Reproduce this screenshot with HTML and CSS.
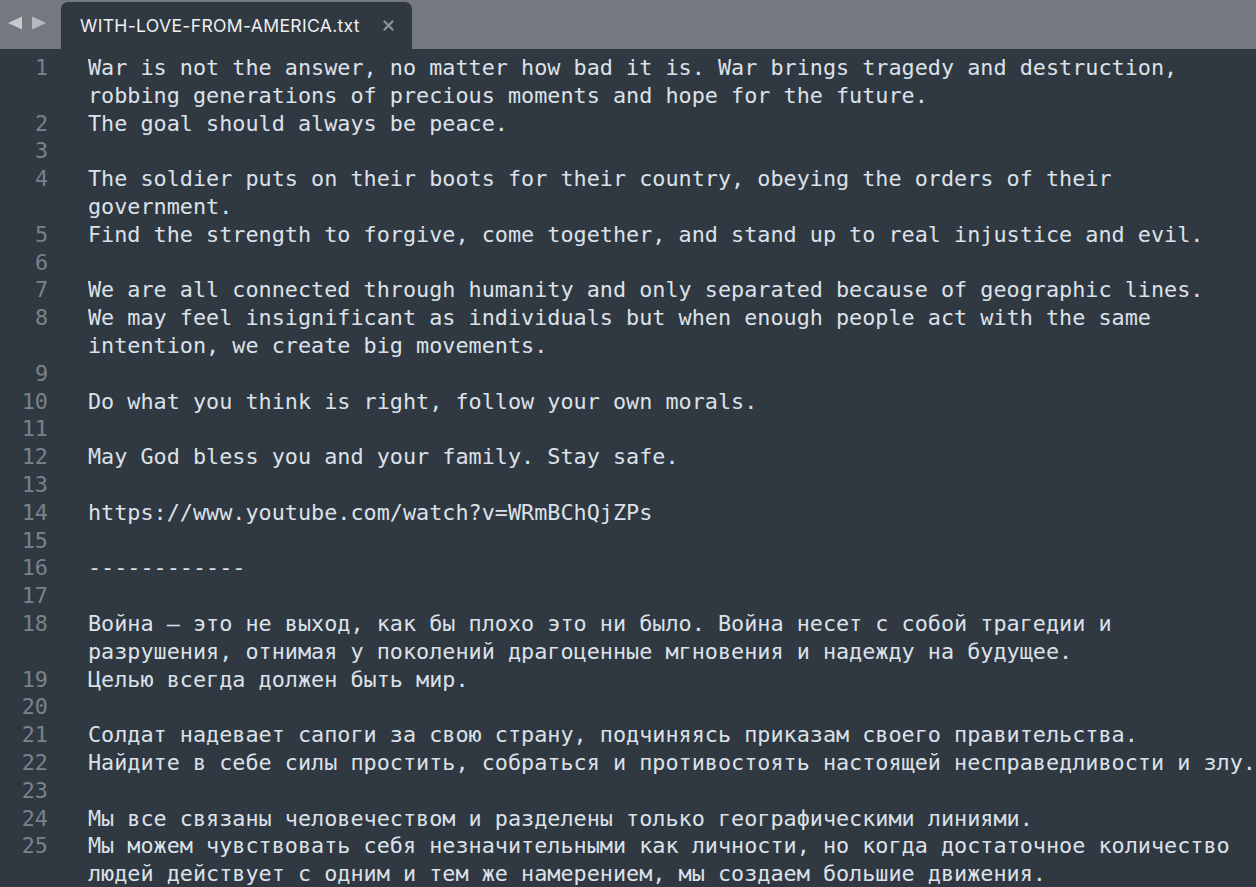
FILE: index.html
```html
<!DOCTYPE html>
<html lang="en">
<head>
<meta charset="utf-8">
<title>WITH-LOVE-FROM-AMERICA.txt</title>
<link rel="stylesheet" href="styles.css">
</head>
<body>
<div class="tabbar">
  <div class="nav">
    <svg width="61" height="49" viewBox="0 0 61 49" aria-hidden="true">
      <polygon points="22,16.5 22,29.5 8,23" fill="#c6c9ce"/>
      <polygon points="32,16.5 32,29.5 46,23" fill="#b6b9bf"/>
    </svg>
  </div>
  <div class="tab">
    <span class="tab-title">WITH-LOVE-FROM-AMERICA.txt</span>
    <svg class="close" width="11" height="11" viewBox="0 0 11 11" aria-hidden="true">
      <path d="M1.5 1.5 L9.5 9.5 M9.5 1.5 L1.5 9.5" stroke="#8c9097" stroke-width="2.3" stroke-linecap="round"/>
    </svg>
  </div>
</div>
<div class="editor">
  <div class="row"><span class="ln">1</span><span class="code">War is not the answer, no matter how bad it is. War brings tragedy and destruction,</span></div>
  <div class="row"><span class="ln"></span><span class="code">robbing generations of precious moments and hope for the future.</span></div>
  <div class="row"><span class="ln">2</span><span class="code">The goal should always be peace.</span></div>
  <div class="row"><span class="ln">3</span><span class="code"></span></div>
  <div class="row"><span class="ln">4</span><span class="code">The soldier puts on their boots for their country, obeying the orders of their</span></div>
  <div class="row"><span class="ln"></span><span class="code">government.</span></div>
  <div class="row"><span class="ln">5</span><span class="code">Find the strength to forgive, come together, and stand up to real injustice and evil.</span></div>
  <div class="row"><span class="ln">6</span><span class="code"></span></div>
  <div class="row"><span class="ln">7</span><span class="code">We are all connected through humanity and only separated because of geographic lines.</span></div>
  <div class="row"><span class="ln">8</span><span class="code">We may feel insignificant as individuals but when enough people act with the same</span></div>
  <div class="row"><span class="ln"></span><span class="code">intention, we create big movements.</span></div>
  <div class="row"><span class="ln">9</span><span class="code"></span></div>
  <div class="row"><span class="ln">10</span><span class="code">Do what you think is right, follow your own morals.</span></div>
  <div class="row"><span class="ln">11</span><span class="code"></span></div>
  <div class="row"><span class="ln">12</span><span class="code">May God bless you and your family. Stay safe.</span></div>
  <div class="row"><span class="ln">13</span><span class="code"></span></div>
  <div class="row"><span class="ln">14</span><span class="code">https://www.youtube.com/watch?v=WRmBChQjZPs</span></div>
  <div class="row"><span class="ln">15</span><span class="code"></span></div>
  <div class="row"><span class="ln">16</span><span class="code">------------</span></div>
  <div class="row"><span class="ln">17</span><span class="code"></span></div>
  <div class="row"><span class="ln">18</span><span class="code">Война — это не выход, как бы плохо это ни было. Война несет с собой трагедии и</span></div>
  <div class="row"><span class="ln"></span><span class="code">разрушения, отнимая у поколений драгоценные мгновения и надежду на будущее.</span></div>
  <div class="row"><span class="ln">19</span><span class="code">Целью всегда должен быть мир.</span></div>
  <div class="row"><span class="ln">20</span><span class="code"></span></div>
  <div class="row"><span class="ln">21</span><span class="code">Солдат надевает сапоги за свою страну, подчиняясь приказам своего правительства.</span></div>
  <div class="row"><span class="ln">22</span><span class="code">Найдите в себе силы простить, собраться и противостоять настоящей несправедливости и злу.</span></div>
  <div class="row"><span class="ln">23</span><span class="code"></span></div>
  <div class="row"><span class="ln">24</span><span class="code">Мы все связаны человечеством и разделены только географическими линиями.</span></div>
  <div class="row"><span class="ln">25</span><span class="code">Мы можем чувствовать себя незначительными как личности, но когда достаточное количество</span></div>
  <div class="row"><span class="ln"></span><span class="code">людей действует с одним и тем же намерением, мы создаем большие движения.</span></div>
</div>
</body>
</html>
```

FILE: styles.css
```css
html, body {
  margin: 0;
  padding: 0;
  background: #303841;
  overflow: hidden;
  height: 887px;
}

.tabbar {
  display: flex;
  align-items: flex-end;
  height: 49px;
  background: #75787f;
}

.nav {
  width: 61px;
  height: 49px;
  flex: none;
}

.nav svg {
  display: block;
}

.tab {
  display: flex;
  align-items: center;
  width: 351px;
  height: 47px;
  box-sizing: border-box;
  padding: 0 0 1px 19px;
  background: #303841;
  border-radius: 7px 7px 0 0;
}

.tab-title {
  flex: none;
  font-family: Inter, "Liberation Sans", sans-serif;
  font-size: 17.6px;
  letter-spacing: 0.3px;
  color: #eef0f2;
  white-space: nowrap;
  width: 303px;
}

.close {
  display: block;
  flex: none;
}

.editor {
  padding-top: 5px;
  font-family: "DejaVu Sans Mono", monospace;
  font-size: 21.8px;
  line-height: 27.8px;
}

.row {
  display: flex;
  height: 27.8px;
  white-space: pre;
}

.ln {
  flex: none;
  width: 48px;
  text-align: right;
  color: #7a828c;
}

.code {
  margin-left: 40px;
  color: #dce1e9;
}
```
